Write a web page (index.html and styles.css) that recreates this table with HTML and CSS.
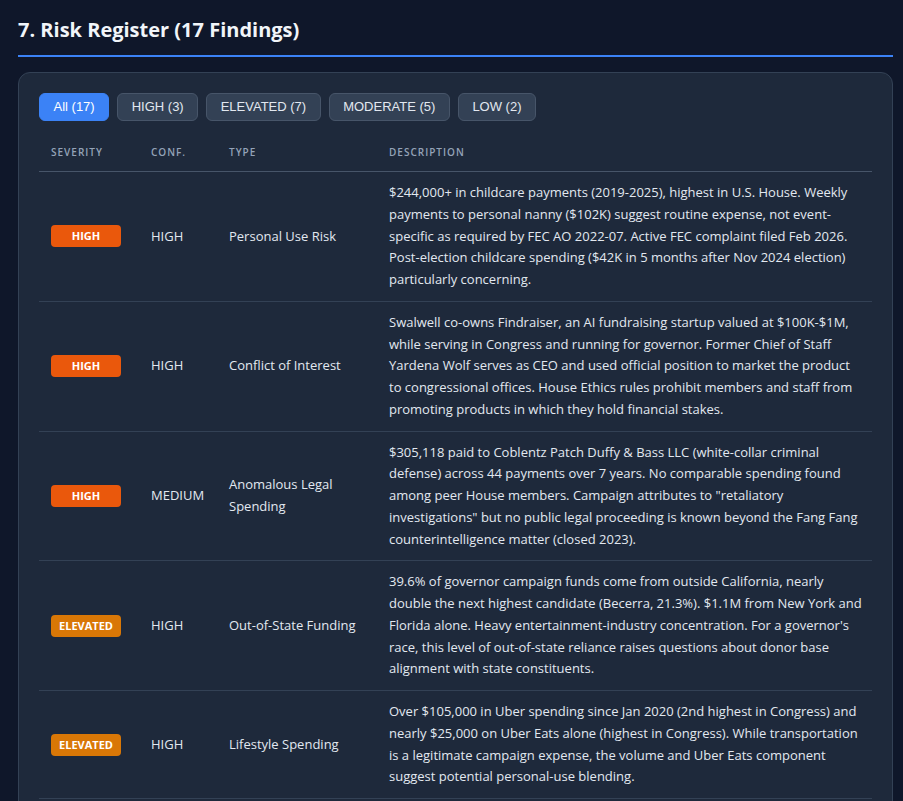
FILE: index.html
```html
<!DOCTYPE html>
<html lang="en">
<head>
<meta charset="utf-8">
<title>Risk Register</title>
<link rel="stylesheet" href="styles.css">
</head>
<body>
<section class="section">
  <h2 class="section-title">7. Risk Register (17 Findings)</h2>
  <div class="card">
    <div class="filters">
      <button class="filter active">All (17)</button>
      <button class="filter">HIGH (3)</button>
      <button class="filter">ELEVATED (7)</button>
      <button class="filter">MODERATE (5)</button>
      <button class="filter">LOW (2)</button>
    </div>
    <table class="risk-table">
      <colgroup>
        <col class="c-sev"><col class="c-conf"><col class="c-type"><col class="c-desc">
      </colgroup>
      <thead>
        <tr><th>Severity</th><th>Conf.</th><th>Type</th><th>Description</th></tr>
      </thead>
      <tbody>
        <tr>
          <td><span class="badge high">HIGH</span></td>
          <td>HIGH</td>
          <td>Personal Use Risk</td>
          <td class="desc">$244,000+ in childcare payments (2019-2025), highest in U.S. House. Weekly payments to personal nanny ($102K) suggest routine expense, not event-specific as required by FEC AO 2022-07. Active FEC complaint filed Feb 2026. Post-election childcare spending ($42K in 5 months after Nov 2024 election) particularly concerning.</td>
        </tr>
        <tr>
          <td><span class="badge high">HIGH</span></td>
          <td>HIGH</td>
          <td>Conflict of Interest</td>
          <td class="desc">Swalwell co-owns Findraiser, an AI fundraising startup valued at $100K-$1M, while serving in Congress and running for governor. Former Chief of Staff Yardena Wolf serves as CEO and used official position to market the product to congressional offices. House Ethics rules prohibit members and staff from promoting products in which they hold financial stakes.</td>
        </tr>
        <tr>
          <td><span class="badge high">HIGH</span></td>
          <td>MEDIUM</td>
          <td>Anomalous Legal Spending</td>
          <td class="desc">$305,118 paid to Coblentz Patch Duffy &amp; Bass LLC (white-collar criminal defense) across 44 payments over 7 years. No comparable spending found among peer House members. Campaign attributes to "retaliatory investigations" but no public legal proceeding is known beyond the Fang Fang counterintelligence matter (closed 2023).</td>
        </tr>
        <tr>
          <td><span class="badge elevated">ELEVATED</span></td>
          <td>HIGH</td>
          <td>Out-of-State Funding</td>
          <td class="desc">39.6% of governor campaign funds come from outside California, nearly double the next highest candidate (Becerra, 21.3%). $1.1M from New York and Florida alone. Heavy entertainment-industry concentration. For a governor's race, this level of out-of-state reliance raises questions about donor base alignment with state constituents.</td>
        </tr>
        <tr>
          <td><span class="badge elevated">ELEVATED</span></td>
          <td>HIGH</td>
          <td>Lifestyle Spending</td>
          <td class="desc">Over $105,000 in Uber spending since Jan 2020 (2nd highest in Congress) and nearly $25,000 on Uber Eats alone (highest in Congress). While transportation is a legitimate campaign expense, the volume and Uber Eats component suggest potential personal-use blending.</td>
        </tr>
      </tbody>
    </table>
  </div>
</section>
</body>
</html>
```

FILE: styles.css
```css
* { box-sizing: border-box; }
html, body { margin: 0; padding: 0; }
body {
  background: #0f172a;
  color: #e2e8f0;
  font-family: "Open Sans", "Noto Sans", "DejaVu Sans", sans-serif;
}
.section {
  padding: 16px 10px 0 18px;
}
.section-title {
  margin: 0;
  font-size: 20px;
  font-weight: 700;
  color: #f1f5f9;
  line-height: 28px;
  padding-bottom: 11px;
  border-bottom: 2px solid #3b82f6;
}
.card {
  margin-top: 15px;
  background: #1e293b;
  border: 1px solid #334155;
  border-radius: 12px;
  padding: 20px 20px 20px 20px;
}
.filters {
  display: flex;
  gap: 8px;
  margin-bottom: 16px;
}
.filter {
  font-family: "Liberation Sans", Arial, sans-serif;
  font-size: 13px;
  line-height: 16px;
  padding: 5px 13.5px;
  height: 28px;
  border: 1px solid #475569;
  background: #334155;
  color: #e2e8f0;
  border-radius: 6px;
}
.filter.active {
  background: #3b82f6;
  border-color: #3b82f6;
  color: #ffffff;
}
.risk-table {
  width: 100%;
  border-collapse: collapse;
  table-layout: fixed;
  font-size: 13px;
}
.c-sev { width: 100px; }
.c-conf { width: 78px; }
.c-type { width: 160px; }
.risk-table th {
  text-align: left;
  font-size: 10px;
  font-weight: 600;
  letter-spacing: 1px;
  text-transform: uppercase;
  color: #94a3b8;
  padding: 8px 12px 12px;
  border-bottom: 1px solid #475569;
}
.risk-table td {
  padding: 10px 12px;
  line-height: 21.75px;
  vertical-align: middle;
  border-bottom: 1px solid #334155;
  color: #e2e8f0;
}
.risk-table td.desc {
  padding-right: 10px;
}
.badge {
  display: inline-block;
  width: 70px;
  text-align: center;
  font-size: 11px;
  font-weight: 700;
  line-height: 22px;
  color: #ffffff;
  border-radius: 4px;
}
.badge.high { background: #ea580c; }
.badge.elevated { background: #d97706; }
```
